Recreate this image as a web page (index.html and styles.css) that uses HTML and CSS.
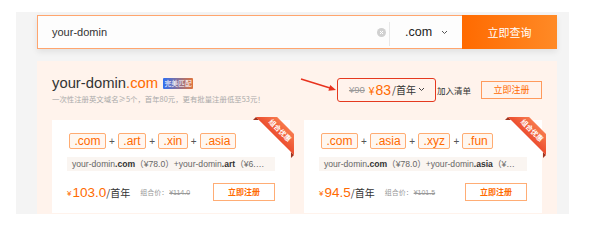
FILE: index.html
```html
<!DOCTYPE html>
<html lang="zh-CN">
<head>
<meta charset="utf-8">
<title>域名查询</title>
<link rel="stylesheet" href="styles.css">
</head>
<body>
<div class="panel">
  <div class="search">
    <div class="search-box">
      <span class="query">your-domin</span>
      <svg class="clear" width="9" height="9" viewBox="0 0 9 9"><circle cx="4.5" cy="4.5" r="4.5" fill="#d0d0d0"/><path d="M3 3 L6 6 M6 3 L3 6" stroke="#fff" stroke-width="1"/></svg>
      <span class="divider"></span>
      <span class="suffix">.com<svg class="chev" width="7" height="5" viewBox="0 0 7 5"><path d="M1 1 L3.5 3.5 L6 1" fill="none" stroke="#555" stroke-width="1"/></svg></span>
    </div>
    <button class="search-btn">立即查询</button>
  </div>

  <div class="result">
    <div class="result-head">
      <div class="head-left">
        <div class="title-row">
          <span class="title">your-domin<span class="tld">.com</span></span>
          <span class="badge">完美匹配</span>
        </div>
        <div class="sub">一次性注册英文域名≥5个，首年80元，更有批量注册低至53元！</div>
      </div>
      <div class="head-right">
        <svg class="arrow" width="37" height="24" viewBox="0 0 37 24"><path d="M1 1 L30 10" stroke="#e8321e" stroke-width="1.5"/><polygon points="36,12 30.2,7 28.4,12.8" fill="#e8321e"/></svg>
        <div class="price-box">
          <span class="old">¥90</span>
          <span class="now"><span class="yen">¥</span>83</span>
          <span class="unit">/首年</span>
          <svg class="chev2" width="7" height="5" viewBox="0 0 7 5"><path d="M1 1 L3.5 3.5 L6 1" fill="none" stroke="#444" stroke-width="1"/></svg>
        </div>
        <span class="cart">加入清单</span>
        <a class="reg-btn">立即注册</a>
      </div>
    </div>

    <div class="cards">
      <div class="card">
        <div class="ribbon"><div class="ribbon-clip"><div class="ribbon-band">组合优惠</div></div></div>
        <div class="tags">
          <span class="tag">.com</span><span class="plus">+</span><span class="tag">.art</span><span class="plus">+</span><span class="tag">.xin</span><span class="plus">+</span><span class="tag">.asia</span>
        </div>
        <div class="desc">your-domin<b>.com</b>（¥78.0）+your-domin<b>.art</b>（¥6.0）</div>
        <div class="price-row">
          <span class="p-yen">¥</span><span class="p-num">103.0</span><span class="p-unit">/首年</span>
          <span class="combo">组合价：</span><span class="combo-old">¥114.0</span>
          <a class="card-btn">立即注册</a>
        </div>
      </div>
      <div class="card">
        <div class="ribbon"><div class="ribbon-clip"><div class="ribbon-band">组合优惠</div></div></div>
        <div class="tags">
          <span class="tag">.com</span><span class="plus">+</span><span class="tag">.asia</span><span class="plus">+</span><span class="tag">.xyz</span><span class="plus">+</span><span class="tag">.fun</span>
        </div>
        <div class="desc">your-domin<b>.com</b>（¥78.0）+your-domin<b>.asia</b>（¥8.0）</div>
        <div class="price-row">
          <span class="p-yen">¥</span><span class="p-num">94.5</span><span class="p-unit">/首年</span>
          <span class="combo">组合价：</span><span class="combo-old">¥101.5</span>
          <a class="card-btn">立即注册</a>
        </div>
      </div>
    </div>
  </div>
</div>
</body>
</html>
```

FILE: styles.css
```css
* { box-sizing: border-box; }
body {
  margin: 0;
  background: #fff;
  font-family: "Liberation Sans", "Noto Sans CJK SC", sans-serif;
  color: #333;
}
.panel {
  margin: 12px 0 0 16px;
  width: 553px;
  height: 202px;
  background: #f4f4f4;
  padding: 3px 12px 0 21px;
}
.search {
  display: flex;
  height: 34px;
  box-shadow: 0 3px 6px rgba(0,0,0,0.08);
}
.search-box {
  width: 425px;
  height: 34px;
  border: 1px solid #ffa56e;
  border-right: none;
  background: #fdfdfd;
  display: flex;
  align-items: center;
  padding-left: 14px;
}
.query {
  flex: 1;
  font-size: 11px;
  color: #333;
}
.clear { margin-right: 3px; }
.divider {
  width: 1px;
  height: 24px;
  background: #e8e8e8;
  margin-top: 4px;
}
.suffix {
  width: 72px;
  padding-left: 15px;
  font-size: 12.5px;
  color: #222;
  display: flex;
  align-items: center;
}
.chev { margin-left: 9px; }
.search-btn {
  width: 95px;
  height: 34px;
  border: none;
  margin: 0;
  padding: 0;
  background: linear-gradient(90deg, #ff6a00, #ff8a26);
  color: #fff;
  font-family: "Noto Sans CJK SC", sans-serif;
  font-size: 11px;
}
.result {
  margin-top: 12px;
  width: 520px;
  height: 153px;
  background: #fff3ec;
  padding: 13px 15px 0;
}
.result-head {
  display: flex;
  align-items: center;
  height: 31px;
}
.head-left { flex: 1; }
.title-row {
  display: flex;
  align-items: center;
  height: 18px;
}
.title {
  font-size: 14.8px;
  line-height: 18px;
  color: #333;
}
.tld { color: #ff6a00; }
.badge {
  margin-left: 5px;
  width: 30px;
  height: 11px;
  background: linear-gradient(90deg, #2f6ef2, #e0733c);
  color: #fff;
  font-family: "Noto Sans CJK SC", sans-serif;
  font-size: 6.8px;
  line-height: 11px;
  text-align: center;
  border-radius: 1px;
}
.sub {
  font-family: "Noto Sans CJK SC", sans-serif;
  font-size: 7.4px;
  line-height: 12px;
  margin-top: 1px;
  color: #aaa;
}
.head-right {
  display: flex;
  align-items: center;
}
.arrow { display: block; }
.price-box {
  width: 99px;
  height: 24px;
  border: 1.5px solid #e5391f;
  border-radius: 3px;
  display: flex;
  align-items: center;
  padding-left: 11px;
}
.old {
  font-size: 9.5px;
  color: #999;
  text-decoration: line-through;
}
.now {
  margin-left: 4px;
  font-size: 14px;
  color: #ff6a00;
}
.yen { font-size: 10px; margin-right: 1px; }
.unit {
  font-family: "Noto Sans CJK SC", sans-serif;
  font-size: 10px;
  color: #333;
  margin-left: 1px;
}
.chev2 { margin-left: 2px; }
.cart {
  margin-left: 1px;
  font-family: "Noto Sans CJK SC", sans-serif;
  font-size: 8.5px;
  color: #333;
}
.reg-btn {
  margin-left: 10px;
  width: 61px;
  height: 18px;
  border: 1px solid #ff9a5c;
  color: #ff6a00;
  font-family: "Noto Sans CJK SC", sans-serif;
  font-size: 9px;
  line-height: 16px;
  text-align: center;
}
.cards {
  margin-top: 15px;
  display: grid;
  grid-template-columns: 238px 238px;
  gap: 14px;
}
.card {
  position: relative;
  background: #fff;
  height: 93px;
  padding: 13px 15px 0;
}
.tags {
  display: flex;
  align-items: center;
  padding-left: 2px;
  height: 16px;
}
.tag {
  height: 16px;
  border: 1px solid #ffac72;
  border-radius: 2px;
  background: #fff7f0;
  color: #ff6a00;
  font-size: 12px;
  line-height: 14px;
  padding: 0 4.5px;
}
.plus {
  font-size: 10px;
  color: #555;
  margin: 0 3px;
}
.desc {
  margin-top: 8px;
  height: 14px;
  background: #faf5f1;
  font-size: 8.6px;
  line-height: 14px;
  color: #666;
  padding: 0 10px 0 5px;
  white-space: nowrap;
  overflow: hidden;
  text-overflow: ellipsis;
}
.desc b { color: #333; font-weight: bold; }
.price-row {
  margin-top: 12px;
  height: 18px;
  display: flex;
  align-items: center;
}
.p-yen { font-size: 8px; color: #ff6a00; margin-right: 1px; align-self: flex-end; margin-bottom: 3px; }
.p-num { font-size: 13.5px; color: #ff6a00; }
.p-unit {
  font-family: "Noto Sans CJK SC", sans-serif;
  font-size: 10px;
  color: #333;
}
.combo {
  margin-left: 10px;
  font-family: "Noto Sans CJK SC", sans-serif;
  font-size: 7px;
  color: #999;
}
.combo-old {
  font-size: 7px;
  color: #999;
  text-decoration: line-through;
  margin-left: 1px;
}
.card-btn {
  margin-left: auto;
  width: 62px;
  height: 18px;
  border: 1px solid #ffad75;
  color: #ff6a00;
  font-family: "Noto Sans CJK SC", sans-serif;
  font-size: 8px;
  line-height: 16px;
  text-align: center;
  font-weight: bold;
}
.ribbon {
  position: absolute;
  top: -3px;
  right: -4px;
  width: 44px;
  height: 44px;
}
.ribbon::before, .ribbon::after {
  content: "";
  position: absolute;
  inset: 0;
  background: #9e3420;
}
.ribbon::before { clip-path: polygon(3px 3px, 6px 0, 9px 3px); }
.ribbon::after { clip-path: polygon(41px 41px, 44px 38px, 41px 35px); }
.ribbon-clip {
  position: absolute;
  inset: 0;
  overflow: hidden;
  z-index: 1;
}
.ribbon-band {
  position: absolute;
  left: 0.25px;
  top: 6.25px;
  width: 60px;
  height: 15px;
  transform: rotate(45deg);
  background: linear-gradient(#f77a4e, #ec4e2f);
  color: #fff;
  font-family: "Noto Sans CJK SC", sans-serif;
  font-size: 7px;
  font-weight: bold;
  line-height: 15px;
  text-align: center;
}
```
